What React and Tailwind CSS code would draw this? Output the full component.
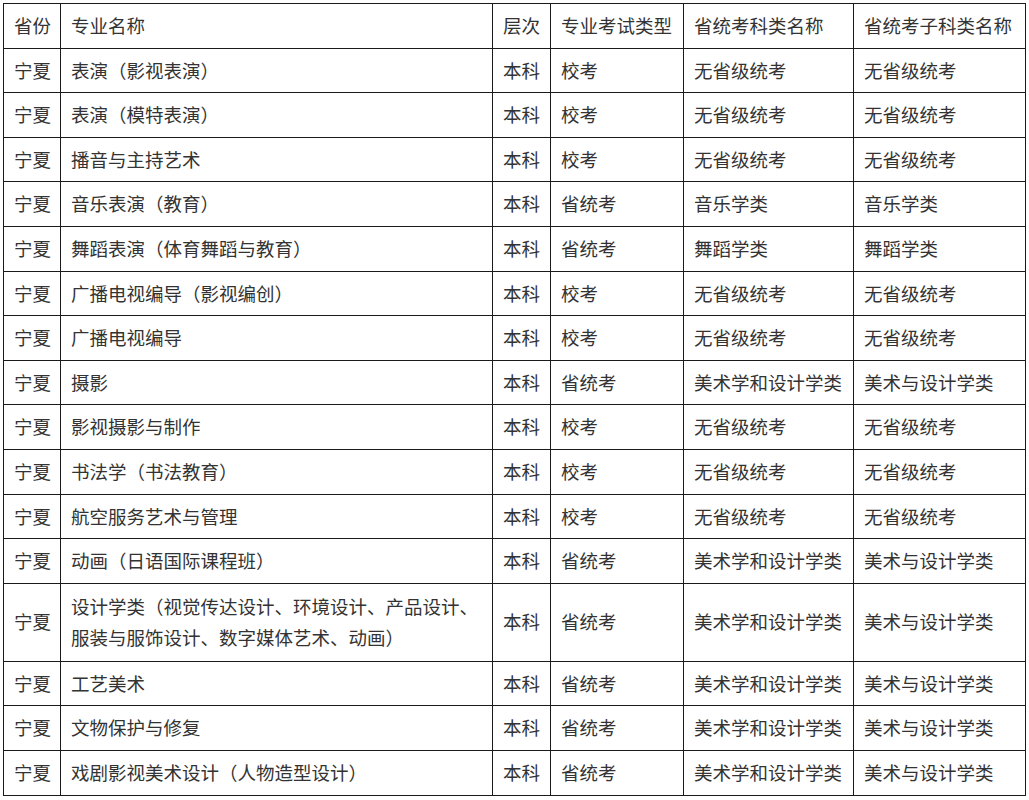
import React from "react";

const rows = [
  ["宁夏", "表演（影视表演）", "本科", "校考", "无省级统考", "无省级统考"],
  ["宁夏", "表演（模特表演）", "本科", "校考", "无省级统考", "无省级统考"],
  ["宁夏", "播音与主持艺术", "本科", "校考", "无省级统考", "无省级统考"],
  ["宁夏", "音乐表演（教育）", "本科", "省统考", "音乐学类", "音乐学类"],
  ["宁夏", "舞蹈表演（体育舞蹈与教育）", "本科", "省统考", "舞蹈学类", "舞蹈学类"],
  ["宁夏", "广播电视编导（影视编创）", "本科", "校考", "无省级统考", "无省级统考"],
  ["宁夏", "广播电视编导", "本科", "校考", "无省级统考", "无省级统考"],
  ["宁夏", "摄影", "本科", "省统考", "美术学和设计学类", "美术与设计学类"],
  ["宁夏", "影视摄影与制作", "本科", "校考", "无省级统考", "无省级统考"],
  ["宁夏", "书法学（书法教育）", "本科", "校考", "无省级统考", "无省级统考"],
  ["宁夏", "航空服务艺术与管理", "本科", "校考", "无省级统考", "无省级统考"],
  ["宁夏", "动画（日语国际课程班）", "本科", "省统考", "美术学和设计学类", "美术与设计学类"],
  ["宁夏", "设计学类（视觉传达设计、环境设计、产品设计、服装与服饰设计、数字媒体艺术、动画）", "本科", "省统考", "美术学和设计学类", "美术与设计学类"],
  ["宁夏", "工艺美术", "本科", "省统考", "美术学和设计学类", "美术与设计学类"],
  ["宁夏", "文物保护与修复", "本科", "省统考", "美术学和设计学类", "美术与设计学类"],
  ["宁夏", "戏剧影视美术设计（人物造型设计）", "本科", "省统考", "美术学和设计学类", "美术与设计学类"],
];

const header = ["省份", "专业名称", "层次", "专业考试类型", "省统考科类名称", "省统考子科类名称"];

export default function App() {
  const cell = "border border-[#1a1a1a] px-[10px] py-[6px] align-middle text-left font-normal";
  return (
    <div className="min-h-[800px] bg-white pl-[3px] pt-[3px]" style={{ fontFamily: '"Microsoft YaHei", "Noto Sans CJK SC", "Noto Sans", sans-serif' }}>
      <table className="table-fixed border-collapse w-[1022px] text-[18.5px] leading-[31.6px] text-[#333]">
        <colgroup>
          <col className="w-[57px]" />
          <col className="w-[432px]" />
          <col className="w-[58px]" />
          <col className="w-[133px]" />
          <col className="w-[170px]" />
          <col className="w-[172px]" />
        </colgroup>
        <thead>
          <tr>
            {header.map((h, i) => (
              <th key={i} className={cell + " whitespace-nowrap overflow-visible"}>{h}</th>
            ))}
          </tr>
        </thead>
        <tbody>
          {rows.map((r, ri) => (
            <tr key={ri} className={ri === 12 ? "h-[78px]" : ""}>
              {r.map((c, ci) => (
                <td key={ci} className={cell + (ci === 1 ? "" : " whitespace-nowrap overflow-visible")}>{c}</td>
              ))}
            </tr>
          ))}
        </tbody>
      </table>
    </div>
  );
}
